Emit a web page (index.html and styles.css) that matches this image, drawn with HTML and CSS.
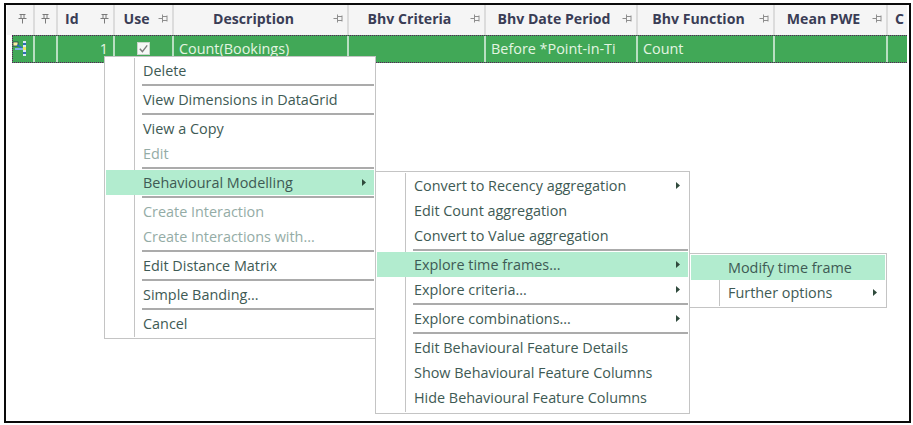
FILE: index.html
```html
<!DOCTYPE html>
<html lang="en">
<head>
<meta charset="utf-8">
<title>Behavioural Modelling menu</title>
<link rel="stylesheet" href="styles.css">
</head>
<body>
<svg class="defs" width="0" height="0" aria-hidden="true">
  <symbol id="pin-v" viewBox="0 0 9 10"><path d="M1.5 .5h6M3 .5v4M6 .5v4M.5 4.5h8M4.5 4.5v5" fill="none" stroke="#7a7a7a"/></symbol>
  <symbol id="pin-h" viewBox="0 0 10 9"><path d="M.5 4.5h4.500M4.500 .5v8M4.500 2.500h4.500M4.500 6.500h4.500M9 1.500v6" fill="none" stroke="#8e8e8e"/></symbol>
  <symbol id="arrow" viewBox="0 0 4 7"><path d="M0 0l4 3.500-4 3.500z" fill="#2f4a3c"/></symbol>
</svg>
<main class="frame">
  <div class="grid">
    <div class="head">
      <div class="hc c1"><svg class="pv"><use href="#pin-v"/></svg></div>
      <div class="hc c2"><svg class="pv"><use href="#pin-v"/></svg></div>
      <div class="hc c3"><span class="lbl left">Id</span><svg class="pv"><use href="#pin-v"/></svg></div>
      <div class="hc c4"><span class="lbl">Use</span><svg class="ph"><use href="#pin-h"/></svg></div>
      <div class="hc c5"><span class="lbl">Description</span><svg class="ph"><use href="#pin-h"/></svg></div>
      <div class="hc c6"><span class="lbl">Bhv Criteria</span><svg class="ph"><use href="#pin-h"/></svg></div>
      <div class="hc c7"><span class="lbl">Bhv Date Period</span><svg class="ph"><use href="#pin-h"/></svg></div>
      <div class="hc c8"><span class="lbl">Bhv Function</span><svg class="ph"><use href="#pin-h"/></svg></div>
      <div class="hc c9"><span class="lbl">Mean PWE</span><svg class="ph"><use href="#pin-h"/></svg></div>
      <div class="hc c10"><span class="lbl left">C</span></div>
    </div>
    <div class="row">
      <div class="rc c1">
        <svg class="tree" viewBox="0 0 15 15" aria-hidden="true">
          <rect x="0" y="1" width="5" height="4" fill="#f4f1a0" stroke="#20304a" stroke-width=".7"/>
          <path d="M4 4l5 3" stroke="#2a6fc0" stroke-width="1.500"/>
          <path d="M2 8h8" stroke="#7fb0e8" stroke-width="2"/>
          <rect x="10" y="0" width="3" height="15" fill="#d8e8f8"/>
          <rect x="10" y="2" width="3" height="2" fill="#2f6db5"/>
          <rect x="10" y="6" width="3" height="3" fill="#e8e860"/>
          <rect x="10" y="11" width="3" height="2" fill="#2f6db5"/>
        </svg>
      </div>
      <div class="rc c2"></div>
      <div class="rc c3 num">1</div>
      <div class="rc c4 chk">
        <svg class="box" viewBox="0 0 13 13" aria-hidden="true">
          <rect x=".5" y=".5" width="12" height="12" fill="#f6f8f6" stroke="#c8d4ca"/>
          <path d="M2.800 6.800l2.600 2.800 4.800-6.200" fill="none" stroke="#7c7c7c" stroke-width="1.400"/>
        </svg>
      </div>
      <div class="rc c5 txt">Count(Bookings)</div>
      <div class="rc c6"></div>
      <div class="rc c7 txt">Before *Point-in-Ti</div>
      <div class="rc c8 txt">Count</div>
      <div class="rc c9"></div>
      <div class="rc c10"></div>
    </div>
  </div>

  <div class="menu m1">
    <div class="item">Delete</div>
    <div class="sep"></div>
    <div class="item">View Dimensions in DataGrid</div>
    <div class="sep"></div>
    <div class="item">View a Copy</div>
    <div class="item off">Edit</div>
    <div class="sep"></div>
    <div class="item on">Behavioural Modelling<svg class="arr"><use href="#arrow"/></svg></div>
    <div class="sep"></div>
    <div class="item off">Create Interaction</div>
    <div class="item off">Create Interactions with...</div>
    <div class="sep"></div>
    <div class="item">Edit Distance Matrix</div>
    <div class="sep"></div>
    <div class="item">Simple Banding...</div>
    <div class="sep"></div>
    <div class="item">Cancel</div>
  </div>

  <div class="menu m2">
    <div class="item">Convert to Recency aggregation<svg class="arr"><use href="#arrow"/></svg></div>
    <div class="item">Edit Count aggregation</div>
    <div class="item">Convert to Value aggregation</div>
    <div class="sep"></div>
    <div class="item on">Explore time frames...<svg class="arr"><use href="#arrow"/></svg></div>
    <div class="item">Explore criteria...<svg class="arr"><use href="#arrow"/></svg></div>
    <div class="sep"></div>
    <div class="item">Explore combinations...<svg class="arr"><use href="#arrow"/></svg></div>
    <div class="sep"></div>
    <div class="item">Edit Behavioural Feature Details</div>
    <div class="item">Show Behavioural Feature Columns</div>
    <div class="item">Hide Behavioural Feature Columns</div>
  </div>

  <div class="menu m3">
    <div class="item on">Modify time frame</div>
    <div class="item">Further options<svg class="arr"><use href="#arrow"/></svg></div>
  </div>
</main>
</body>
</html>
```
FILE: styles.css
```css
html, body {
  margin: 0;
  padding: 0;
  background: #fff;
}
body {
  width: 913px;
  height: 425px;
  overflow: hidden;
  font-family: "Open Sans", "Noto Sans", sans-serif;
}
.defs {
  position: absolute;
}
.frame {
  position: relative;
  box-sizing: border-box;
  width: 907px;
  height: 420px;
  margin: 3px 0 0 4px;
  border: 2px solid #0a0a0a;
  background: #fff;
  padding-left: 1px;
}
.grid {
  width: 900px;
  display: flex;
  flex-direction: column;
}
.head {
  display: grid;
  grid-template-columns: 24px 23px 57px 59px 175px 137px 152px 137px 113px 19px;
  padding-left: 4px;
  height: 30px;
  background: #f5f5f5;
}
.hc {
  display: flex;
  align-items: center;
  padding: 0 4px 3px 0;
  box-sizing: border-box;
  border-right: 2px solid #dcdcdc;
  overflow: hidden;
  font-size: 14.1px;
  font-weight: 700;
  color: #3a3d55;
}
.hc.c1, .hc.c2 {
  justify-content: center;
  padding-right: 0;
}
.hc.c10 {
  border-right: 0;
  padding-right: 0;
}
.lbl {
  flex: 1;
  text-align: center;
  white-space: nowrap;
}
.lbl.left {
  text-align: left;
  padding-left: 7px;
}
.pv {
  width: 9px;
  height: 10px;
  flex: none;
}
.ph {
  width: 10px;
  height: 9px;
  flex: none;
}
.row {
  display: grid;
  height: 28px;
  background: #41a857;
  margin-left: 5px;
  grid-template-columns: 22px 23px 57px 59px 175px 137px 152px 137px 113px 19px;
  border-top: 1px dotted #5a1a5a;
  border-bottom: 1px dotted #5a1a5a;
  border-left: 1px dotted #5a1a5a;
  box-sizing: border-box;
}
.rc {
  display: flex;
  align-items: center;
  box-sizing: border-box;
  border-right: 2px solid #b9dfc2;
  padding-bottom: 2px;
  font-size: 14.4px;
  color: #e4f5e2;
  white-space: nowrap;
  overflow: hidden;
}
.rc.c10 {
  border-right: 0;
}
.rc.num {
  justify-content: flex-end;
  padding-right: 5px;
}
.rc.chk {
  padding-left: 22px;
}
.rc.txt {
  padding-left: 5px;
}
.box {
  width: 13px;
  height: 13px;
}
.tree {
  width: 15px;
  height: 15px;
}
.menu {
  position: absolute;
  box-sizing: border-box;
  background: #fff;
  border: 1px solid #c4c4c4;
  padding: 1px;
  display: flex;
  flex-direction: column;
  font-size: 14.4px;
  color: #3e5a54;
}
.menu::before {
  content: "";
  position: absolute;
  top: 1px;
  bottom: 1px;
  left: 29px;
  width: 1px;
  background: #c4c4c4;
}
.m1 {
  left: 98px;
  top: 51px;
  width: 272px;
  height: 283px;
}
.m2 {
  left: 369px;
  top: 166px;
  width: 315px;
  height: 243px;
}
.m3 {
  left: 683px;
  top: 248px;
  width: 198px;
  height: 55px;
}
.item {
  position: relative;
  height: 25px;
  flex: none;
  box-sizing: border-box;
  display: flex;
  align-items: center;
  justify-content: space-between;
  padding: 0 8px 1px 37px;
  white-space: nowrap;
}
.item.on {
  background: #b2eccf;
}
.item.off {
  color: #94aca6;
}
.sep {
  height: 2px;
  flex: none;
  margin: 1px 0 1px 36px;
  background: #ababab;
}
.arr {
  width: 4px;
  height: 7px;
  flex: none;
}
```
